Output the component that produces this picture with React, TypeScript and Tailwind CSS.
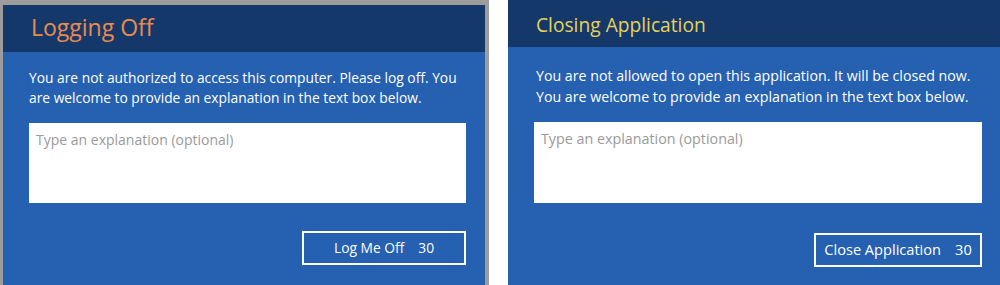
import React from "react";

const font = { fontFamily: '"Open Sans", "Noto Sans", sans-serif' };

function Dialog({
  title,
  titleCls,
  lines,
  button,
  textCls,
  areaCls,
  btnTop,
  btnCls,
  pl,
  pr,
}: {
  title: string;
  titleCls: string;
  lines: string[];
  button: string;
  textCls: string;
  areaCls: string;
  btnTop: string;
  btnCls: string;
  pl: string;
  pr: string;
}) {
  return (
    <div className="flex h-full flex-col bg-[#2660b0]" style={font}>
      <div className="flex h-[47px] items-center bg-[#15386b]">
        <div className={`leading-none ${titleCls}`}>{title}</div>
      </div>
      <div className={`flex flex-col ${pl} ${pr}`}>
        <div className={`text-white ${textCls}`}>
          {lines.map((l) => (
            <div key={l}>{l}</div>
          ))}
        </div>
        <div className={`bg-white px-[7px] pt-[6px] text-[#9a9a9a] ${areaCls}`}>
          Type an explanation (optional)
        </div>
        <div className={`${btnTop} flex justify-end`}>
          <div
            className={`flex h-[34px] items-center justify-center border-2 border-white text-white ${btnCls}`}
          >
            <span>{button}</span>
            <span className="ml-[14px]">30</span>
          </div>
        </div>
      </div>
    </div>
  );
}

export default function App() {
  return (
    <div className="flex h-[285px] w-[1000px] overflow-hidden bg-white">
      <div className="h-full w-[489px] bg-[#9c9c9c] pl-[3px] pr-[4px] pt-[5px]">
        <Dialog
          title="Logging Off"
          titleCls="pl-[28px] pb-[3px] text-[23px] text-[#ec8a4c]"
          lines={[
            "You are not authorized to access this computer. Please log off. You",
            "are welcome to provide an explanation in the text box below.",
          ]}
          button="Log Me Off"
          textCls="mt-[16px] text-[13.8px] leading-[20px]"
          areaCls="mt-[15px] h-[80px] text-[14px]"
          btnTop="mt-[28px]"
          btnCls="w-[164px] text-[13.8px]"
          pl="pl-[26px]"
          pr="pr-[19px]"
        />
      </div>
      <div className="ml-[19px] h-full flex-1">
        <Dialog
          title="Closing Application"
          titleCls="pl-[28px] pt-[2px] text-[19.2px] text-[#e6d25a]"
          lines={[
            "You are not allowed to open this application. It will be closed now.",
            "You are welcome to provide an explanation in the text box below.",
          ]}
          button="Close Application"
          textCls="mt-[18px] text-[14.2px] leading-[21px]"
          areaCls="-ml-[2px] mt-[15px] h-[81px] text-[14.3px]"
          btnTop="mt-[30px]"
          btnCls="w-[168px] text-[14.6px]"
          pl="pl-[28px]"
          pr="pr-[18px]"
        />
      </div>
    </div>
  );
}
